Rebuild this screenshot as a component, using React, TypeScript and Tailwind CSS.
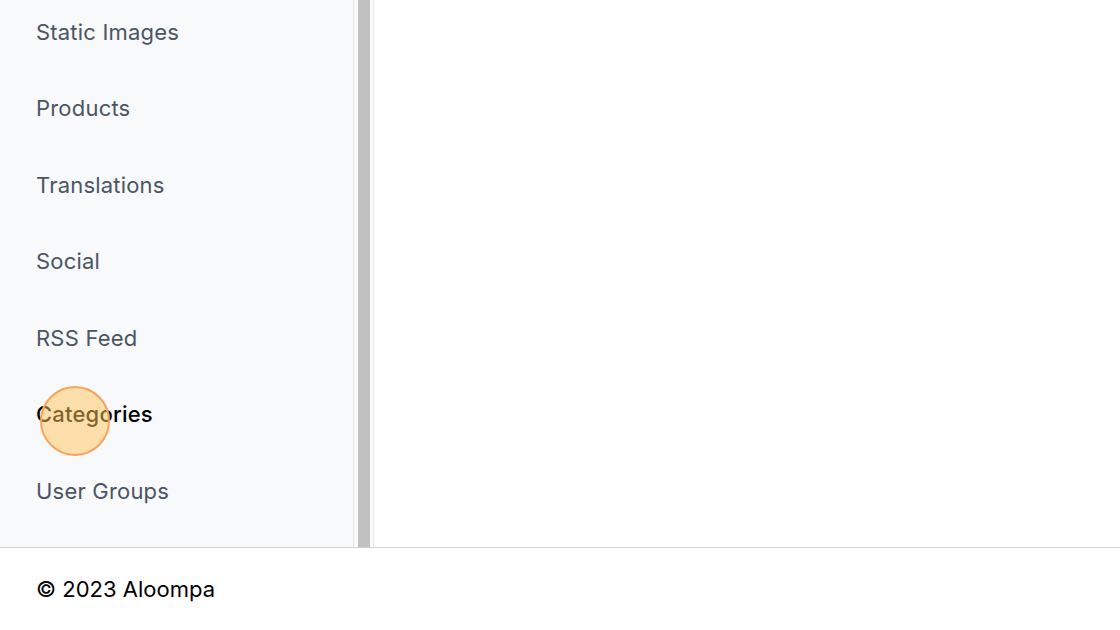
const items = [
  "Static Images",
  "Products",
  "Translations",
  "Social",
  "RSS Feed",
  "Categories",
  "User Groups",
];

export default function App() {
  return (
    <div className="h-[630px] w-[1120px] flex flex-col bg-white font-['Inter','Liberation_Sans',sans-serif] overflow-hidden">
      <div className="flex h-[547px] shrink-0">
        {/* barra lateral */}
        <aside className="w-[354px] bg-[#f8f9fb] border-r border-[#e6e7e9] overflow-hidden">
          <ul className="-mt-[6px]">
            {items.map((item) => (
              <li
                key={item}
                className={
                  item === "Categories"
                    ? "relative h-[76.5px] flex items-center pl-9 text-[22px] tracking-[0.2px] font-medium text-black"
                    : "h-[76.5px] flex items-center pl-9 text-[22px] tracking-[0.2px] text-[#4b5563]"
                }
              >
                {item}
                {item === "Categories" && (
                  <span className="absolute left-[40px] top-[9px] w-[70px] h-[70px] rounded-full bg-[#ffc35a]/50 border-2 border-[#f7a35c]" />
                )}
              </li>
            ))}
          </ul>
        </aside>
        {/* scrollbar */}
        <div className="w-[20px] bg-[#fafafa] border-r border-[#e8e8e8] flex pl-[4px]">
          <div className="w-[12px] h-full bg-[#c1c1c1]" />
        </div>
        <main className="flex-1 bg-white" />
      </div>
      <footer className="flex-1 border-t border-[#d4d4d4] flex items-center px-9 text-[22px] text-black">
        © 2023 Aloompa
      </footer>
    </div>
  );
}
